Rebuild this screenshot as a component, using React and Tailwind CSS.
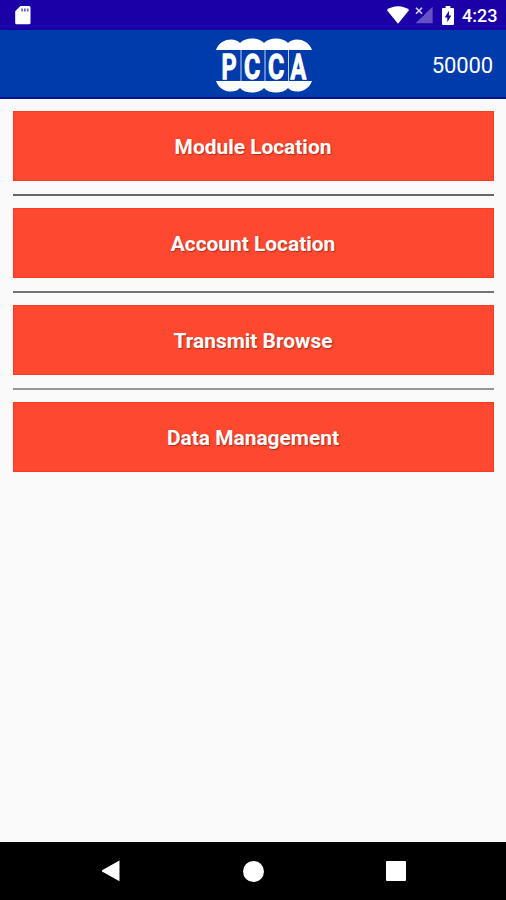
const menuItems = ['Module Location', 'Account Location', 'Transmit Browse', 'Data Management'];

// Colour of the rule under each button
const ruleColors = ['bg-[#666666]', 'bg-[#747474]', 'bg-[#969696]'];

function StatusBar() {
  return (
    <div className="flex h-[30px] shrink-0 items-center justify-between bg-[#1b00a8] pl-[15px] pr-[10px] text-white">
      <svg className="h-[20px] w-[16px]" viewBox="0 0 16 20" fill="currentColor">
        <path d="M5.5 1H14a1.5 1.5 0 0 1 1.5 1.5v15.3a1.5 1.5 0 0 1-1.5 1.5H1.7a1.5 1.5 0 0 1-1.5-1.5V6.3Z" />
        <path d="M6.2 3.6h1.7v3H6.2zM9 3.6h1.7v3H9zM11.8 3.6h1.7v3h-1.7z" fill="#6e5cc8" />
      </svg>
      <div className="flex items-center">
        <svg className="h-[18px] w-[24px]" viewBox="0 0 24 18" fill="currentColor">
          <path d="M.8 4.1C7.2-.9 16.8-.9 23.2 4.1L12 17.7Z" />
        </svg>
        <svg className="ml-[4px] h-[18px] w-[20px]" viewBox="0 0 20 18">
          <path d="M18.6.8v16.5H1.5Z" fill="#6650c6" />
          <path d="M0 0h10v10H0z" fill="#1b00a8" />
          <path d="m2 1.8 6 6m0-6-6 6" stroke="#d9d3f2" strokeWidth="1.6" />
        </svg>
        <svg className="ml-[8px] h-[19px] w-[12px]" viewBox="0 0 12 19" fill="currentColor">
          <path d="M3.6 0h4.8v2H11a1 1 0 0 1 1 1v15a1 1 0 0 1-1 1H1a1 1 0 0 1-1-1V3a1 1 0 0 1 1-1h2.6Z" />
          <path d="M6.9 4.8 2.8 11.4h2.5v4.9l4-6.9H6.9Z" fill="#1b00a8" />
        </svg>
        <span className="ml-[8px] w-[34px] whitespace-nowrap pt-[1px] text-[18px] font-medium leading-[20px]">4:23</span>
      </div>
    </div>
  );
}

function Logo() {
  return (
    <svg className="h-[58px] w-[104px]" viewBox="0 0 104 58" fill="#fff" role="img" aria-label="PCCA">
      <path d="M4 14C8 2 23 1 28 7 33 1 47 1 52 7 57 1 71 1 76 7 81 1 96 2 100 14Z" />
      <path d="M4 45C8 57 23 58 28 52 33 58 47 58 52 52 57 58 71 58 76 52 81 58 96 57 100 45Z" />
      <path d="M29 14v31M53 14v31M76.5 14v31" stroke="#c5d4f0" strokeWidth="1" />
      <g fontFamily="Roboto, sans-serif" fontSize="35.5" fontWeight="600" stroke="#fff" strokeWidth="1.4">
        <text transform="translate(9.5 42.5) scale(.66 1)">P</text>
        <text transform="translate(32 42.5) scale(.7 1)">C</text>
        <text transform="translate(56 42.5) scale(.7 1)">C</text>
        <text transform="translate(78.5 42.5) scale(.66 1)">A</text>
      </g>
    </svg>
  );
}

function Header() {
  return (
    <header className="flex h-[69px] shrink-0 items-center border-b-2 border-[#08128f] bg-[#003bab] pl-[212px] pr-[13px] pt-[3px]">
      <Logo />
      <span className="ml-auto pt-[2px] text-[22px] leading-[26px] tracking-[-0.1px] text-white">50000</span>
    </header>
  );
}

function NavBar() {
  return (
    <nav className="flex h-[58px] shrink-0 items-center justify-between bg-black pl-[101px] pr-[100px] text-white">
      <svg className="h-[22px] w-[20px]" viewBox="0 0 20 22" fill="currentColor">
        <path d="M18.5.5v20.8L1 11.6v-1.3Z" />
      </svg>
      <div className="size-[21px] rounded-full bg-white" />
      <div className="size-[20px] rounded-[1px] bg-white" />
    </nav>
  );
}

export default function App() {
  return (
    <div className="flex h-screen w-full flex-col overflow-hidden bg-[#fafafa] font-['Roboto',sans-serif]">
      <StatusBar />
      <Header />
      <main className="flex-1 px-[12.5px] pt-[12px]">
        {menuItems.map((item, i) => (
          <div key={item}>
            <button className="block h-[70px] w-full border border-[#fc3a24] bg-[#ff4830] pt-[2px] text-[20.9px] font-bold leading-[24px] text-white [text-shadow:1px_1px_1px_#a8301f]">
              {item}
            </button>
            {i < menuItems.length - 1 && <div className={`my-[12.5px] h-[2px] ${ruleColors[i]}`} />}
          </div>
        ))}
      </main>
      <NavBar />
    </div>
  );
}
